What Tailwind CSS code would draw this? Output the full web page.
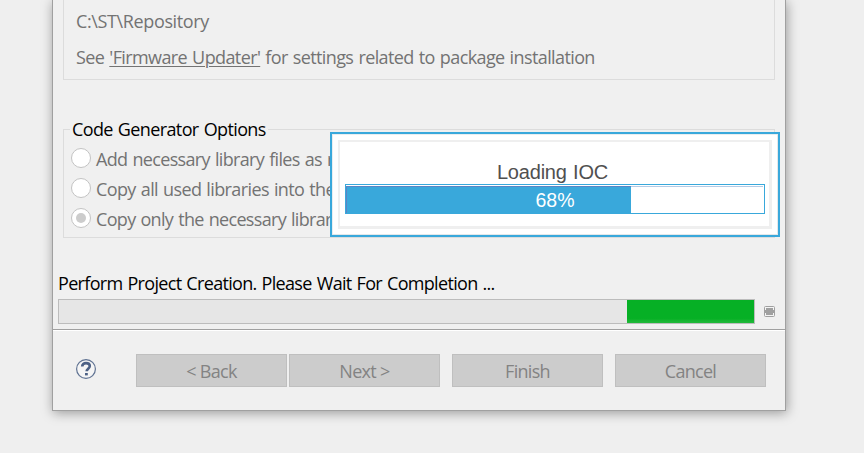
<!DOCTYPE html>
<html lang="en">

<head>
    <meta charset="UTF-8">
    <meta name="viewport" content="width=device-width, initial-scale=1.0">
    <title>Project Manager</title>
    <script src="https://cdn.jsdelivr.net/npm/@tailwindcss/browser@4"></script>
</head>

<body class="h-[453px] overflow-hidden bg-[#efefef] font-['Open_Sans','Noto_Sans',sans-serif] text-[18px] leading-6 text-[#737373] whitespace-nowrap [word-spacing:1px]">

    <div class="relative ml-[52px] w-[734px] h-[411px] flex flex-col bg-[#f0f0f0] border border-t-0 border-[#a0a0a0] shadow-[1px_2px_11px_0_rgba(0,0,0,0.36)]">

        <!-- Firmware location -->
        <section class="mx-2.5 h-20 px-3 pt-[9px] border border-t-0 border-[#dcdcdc]">
            <p class="tracking-[-0.37px]">C:\ST\Repository</p>
            <p class="mt-3 tracking-[-0.61px]">See <a href="#" class="underline underline-offset-2 decoration-1">'Firmware Updater'</a> for settings related to package installation</p>
        </section>

        <!-- Code generator options -->
        <fieldset class="mx-2.5 mt-[37px] h-[121px] border border-[#dcdcdc] pl-[7px]">
            <legend class="-ml-px px-0.5 leading-6 text-black tracking-[-0.62px]">Code Generator Options</legend>
            <label class="flex h-[30px] -mt-px gap-[5px]">
                <span class="mt-2 size-5 rounded-full border border-[#c3c3c3] bg-white"></span>
                <span class="pt-[7px] tracking-[-0.66px]">Add necessary library files as reference</span>
            </label>
            <label class="flex h-[30px] gap-[5px]">
                <span class="mt-2 size-5 rounded-full border border-[#c3c3c3] bg-white"></span>
                <span class="pt-[7px] tracking-[-0.62px]">Copy all used libraries into the project</span>
            </label>
            <label class="flex h-[30px] gap-[5px]">
                <span class="mt-2 size-5 rounded-full border border-[#c3c3c3] bg-white flex items-center justify-center">
                    <span class="size-2.5 rounded-full bg-[#cccccc]"></span>
                </span>
                <span class="pt-[7px] tracking-[-0.68px]">Copy only the necessary library files</span>
            </label>
        </fieldset>

        <!-- Task progress -->
        <p class="mt-[33px] ml-[5px] text-black tracking-[-0.68px]">Perform Project Creation. Please Wait For Completion ...</p>
        <div class="mt-1 ml-[5px] flex items-center">
            <div class="w-[697px] h-[25px] flex justify-end border border-[#bcbcbc] bg-[#e6e6e6]">
                <div class="w-[127px] bg-linear-to-b from-[#06b025] from-80% to-[#1fb93a]"></div>
            </div>
            <svg class="ml-[9px]" width="11" height="11" viewBox="0 0 11 11">
                <rect x="0.5" y="0.5" width="10" height="10" rx="1" fill="#f4f4f4" stroke="#a0a0a0" />
                <rect x="2" y="2" width="7" height="7" fill="#a0a0a0" />
                <path d="M1 4h9v3H1z" fill="#a0a0a0" />
            </svg>
        </div>

        <!-- Wizard buttons -->
        <div class="mt-[5px] flex-1 border-t border-[#a0a0a0]">
            <div class="h-px bg-white"></div>
            <div class="flex pt-[23px] pl-[23px] text-[#838383] tracking-[-0.7px]">
                <svg class="mt-1 mr-[39px]" width="21" height="22" viewBox="0 0 21 22">
                    <circle cx="10" cy="11" r="9.4" fill="#f5f5f5" stroke="#5f7292" stroke-width="1.2" />
                    <path d="M6.2 8.6C6.2 6.2 7.8 5.1 10 5.1s3.8 1.1 3.8 3c0 2.5-3.2 2.7-3.2 5.2" fill="none" stroke="#4d6185" stroke-width="2.6" />
                    <rect x="9" y="15" width="2.8" height="2.4" fill="#4d6185" />
                </svg>
                <button class="w-[151px] h-[33px] border border-[#bfbfbf] bg-[#cccccc]">&lt; Back</button>
                <button class="ml-0.5 w-[151px] h-[33px] border border-[#bfbfbf] bg-[#cccccc]">Next &gt;</button>
                <button class="ml-3 w-[151px] h-[33px] border border-[#bfbfbf] bg-[#cccccc]">Finish</button>
                <button class="ml-3 w-[151px] h-[33px] border border-[#bfbfbf] bg-[#cccccc]">Cancel</button>
            </div>
        </div>

        <!-- Loading popup -->
        <div class="absolute left-[277px] top-[132px] w-[450px] h-[105px] p-1.5 border-2 border-[#39a8db] bg-white shadow-[inset_-1px_-1px_0_#e4e8ea,inset_1px_1px_0_#e9eef0] font-['Liberation_Sans',Arial,sans-serif]">
            <div class="h-[89px] border-2 border-r-3 border-b-3 border-[#efefef] px-[5px] pr-1">
                <p class="pt-[18px] pr-[5px] text-center text-[20px] leading-6 tracking-[-0.2px] text-[#505050]">Loading IOC</p>
                <div class="relative w-[420px] h-[30px] border border-[#39a8db] bg-white">
                    <div class="mt-px mr-px h-[27px] border-t border-[#b4cbe6]">
                        <div class="-mt-px h-[27px] border-t border-l border-[#5b85c4] bg-[#39a8db]" style="width: 68.4%"></div>
                    </div>
                    <span class="absolute inset-0 pt-[3px] text-center text-[19.5px] leading-6 text-white">68%</span>
                </div>
            </div>
        </div>
    </div>

</body>

</html>
